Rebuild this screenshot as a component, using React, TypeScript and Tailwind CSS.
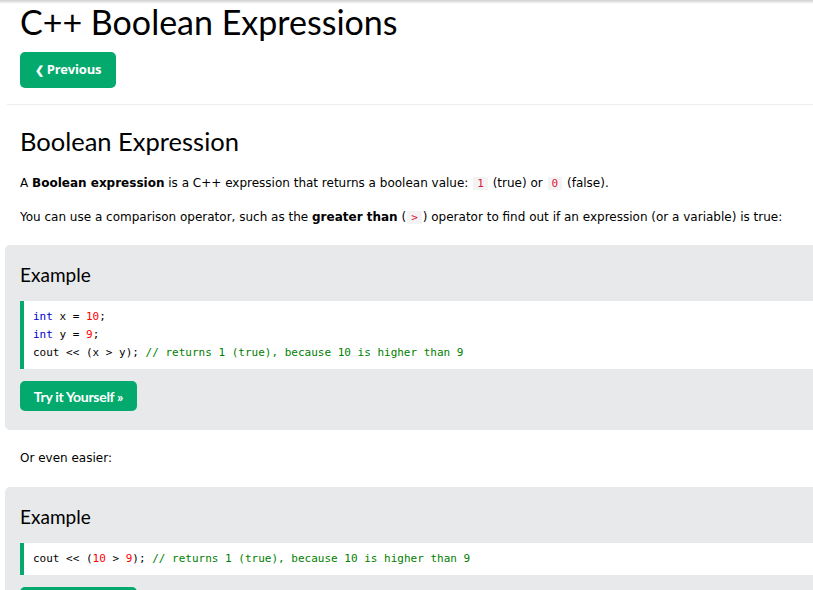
import React from 'react';

const heading = { fontFamily: '"Segoe UI", Lato, "Open Sans", Arial, sans-serif' };

const CodeSpan: React.FC<{ children: React.ReactNode }> = ({ children }) => (
  <span className="font-['DejaVu_Sans_Mono',monospace] text-[11px] text-[crimson] bg-[#f3f3f3] px-[4px] mx-[1px]">
    {children}
  </span>
);

const Kw: React.FC<{ children: React.ReactNode }> = ({ children }) => (
  <span className="text-[mediumblue]">{children}</span>
);
const Num: React.FC<{ children: React.ReactNode }> = ({ children }) => (
  <span className="text-[red]">{children}</span>
);
const Cm: React.FC<{ children: React.ReactNode }> = ({ children }) => (
  <span className="text-[green]">{children}</span>
);

const TryButton = () => (
  <button className="h-[30px] w-[117px] rounded-[5px] bg-[#04AA6D] text-white text-[14px] font-bold tracking-[-0.3px] font-['Lato',sans-serif]">
    Try it Yourself »
  </button>
);

const ExampleBox: React.FC<{ children: React.ReactNode }> = ({ children }) => (
  <div className="ml-[5px] rounded-l-[5px] bg-[#E7E9EB] pl-[15px] pt-[16px] pb-[19px]">
    <h3 className="text-[19px] text-black leading-[28px] mb-[12px]" style={heading}>
      Example
    </h3>
    <div className="bg-white border-l-[4px] border-[#04AA6D] py-[7px] pl-[9px] font-['DejaVu_Sans_Mono',monospace] text-[11px] leading-[18px] text-black whitespace-pre">
      {children}
    </div>
    <div className="mt-[12px]">
      <TryButton />
    </div>
  </div>
);

export default function App() {
  return (
    <div className="relative h-[590px] w-full overflow-hidden bg-white font-['DejaVu_Sans',Verdana,sans-serif] text-[12px] text-black">
      <div className="absolute inset-x-0 top-0 h-[4px] bg-gradient-to-b from-[#d0d0d0] to-white" />

      <div className="pl-[20px] pt-[2px]">
        <h1 className="text-[34px] leading-[40px] text-black" style={heading}>
          C++ Boolean Expressions
        </h1>
        <button className="mt-[10px] h-[36px] w-[96px] rounded-[5px] bg-[#04AA6D] text-white text-[13px] font-bold font-['Open_Sans',sans-serif] flex items-center justify-center gap-[3px]">
          <span className="text-[11px]">❮</span>
          <span className="tracking-[-0.2px]">Previous</span>
        </button>
      </div>

      <div className="ml-[7px] mt-[16px] h-px bg-[#eeeeee]" />

      <div className="pl-[20px]">
        <h2 className="mt-[19px] text-[25.5px] leading-[34px] text-black" style={heading}>
          Boolean Expression
        </h2>
        <p className="mt-[16px] leading-[18px]">
          A <b>Boolean expression</b> is a C++ expression that returns a boolean value: <CodeSpan>1</CodeSpan> (true) or{' '}
          <CodeSpan>0</CodeSpan> (false).
        </p>
        <p className="mt-[15px] leading-[18px]">
          You can use a comparison operator, such as the <b>greater than</b> (<CodeSpan>&gt;</CodeSpan>) operator to find
          out if an expression (or a variable) is true:
        </p>
      </div>

      <div className="mt-[18px]">
        <ExampleBox>
          <div><Kw>int</Kw> x = <Num>10</Num>;</div>
          <div><Kw>int</Kw> y = <Num>9</Num>;</div>
          <div>cout &lt;&lt; (x &gt; y); <Cm>// returns 1 (true), because 10 is higher than 9</Cm></div>
        </ExampleBox>
      </div>

      <p className="pl-[20px] mt-[19px] leading-[18px]">Or even easier:</p>

      <div className="mt-[20px]">
        <ExampleBox>
          <div>cout &lt;&lt; (<Num>10</Num> &gt; <Num>9</Num>); <Cm>// returns 1 (true), because 10 is higher than 9</Cm></div>
        </ExampleBox>
      </div>
    </div>
  );
}
